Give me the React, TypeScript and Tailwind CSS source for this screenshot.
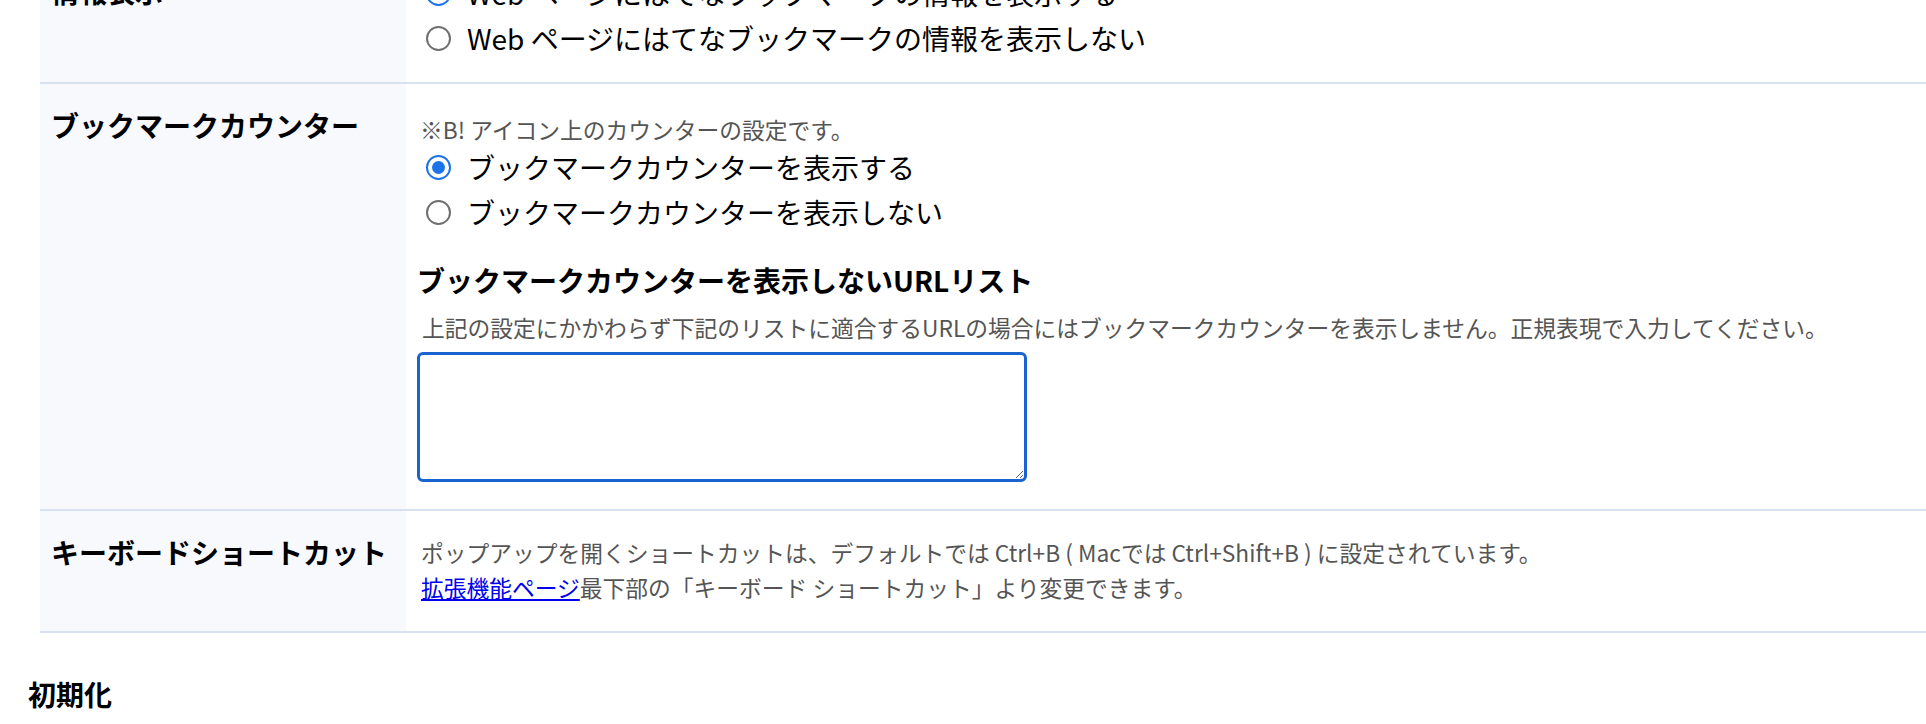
import React from "react";

const FONT = { fontFamily: '"Noto Sans CJK JP", "Noto Sans", sans-serif' };

function Radio({ checked, label }: { checked?: boolean; label: string }) {
  return (
    <label className="flex h-[30px] items-center gap-[16px] pl-[9px]">
      {checked ? (
        <span className="flex h-[25px] w-[25px] items-center justify-center rounded-full border-[2.5px] border-[#1a73e8] bg-white">
          <span className="h-[13px] w-[13px] rounded-full bg-[#1a73e8]" />
        </span>
      ) : (
        <span className="h-[25px] w-[25px] rounded-full border-2 border-[#6f6f6f] bg-white" />
      )}
      <span className="text-[28px] leading-[30px] text-black whitespace-nowrap">{label}</span>
    </label>
  );
}

function Row({ title, children, contentClass }: { title: string; children: React.ReactNode; contentClass: string }) {
  return (
    <div className="flex border-b-2 border-[#d8e1ef]">
      <div className="w-[366px] shrink-0 bg-[#f7f9fd] pl-[11px] pt-[21px]">
        <div className="text-[28px] font-bold leading-[40px] text-black">{title}</div>
      </div>
      <div className={"flex-1 bg-white pl-[11px] " + contentClass}>{children}</div>
    </div>
  );
}

export default function App() {
  return (
    <div className="min-h-[724px] overflow-hidden bg-white" style={FONT}>
      <div className="-mt-[50px]">
        <div className="ml-[40px]">
          <Row title="情報表示" contentClass="pt-[28px] pb-[29px]">
            <div className="flex flex-col gap-[15px]">
              <Radio checked label="Web ページにはてなブックマークの情報を表示する" />
              <Radio label="Web ページにはてなブックマークの情報を表示しない" />
            </div>
          </Row>

          <Row title="ブックマークカウンター" contentClass="pt-[30px] pb-[27px]">
            <p className="ml-[3px] text-[22.75px] leading-[32px] text-[#555]">※B! アイコン上のカウンターの設定です。</p>
            <div className="mt-[6px] flex flex-col gap-[15px]">
              <Radio checked label="ブックマークカウンターを表示する" />
              <Radio label="ブックマークカウンターを表示しない" />
            </div>
            <h3 className="mt-[33px] text-[28px] font-bold leading-[40px] text-black">
              ブックマークカウンターを表示しないURLリスト
            </h3>
            <p className="ml-[5px] mt-[12px] text-[22.75px] leading-[32px] text-[#555]">
              上記の設定にかかわらず下記のリストに適合するURLの場合にはブックマークカウンターを表示しません。正規表現で入力してください。
            </p>
            <textarea className="mt-[8px] block h-[130px] w-[610px] rounded-[6px] border-[3px] border-[#1a64cf] bg-white outline-none" />
          </Row>

          <Row title="キーボードショートカット" contentClass="pt-[24px] pb-[26px]">
            <div className="ml-[4px] text-[22.75px] leading-[35px] text-[#555]">
              <div>ポップアップを開くショートカットは、デフォルトでは Ctrl+B ( Macでは Ctrl+Shift+B ) に設定されています。</div>
              <div>
                <a href="#" className="text-[#0000ee] underline">拡張機能ページ</a>
                最下部の「キーボード ショートカット」より変更できます。
              </div>
            </div>
          </Row>
        </div>

        <h2 className="ml-[28px] mt-[41px] text-[28px] font-bold leading-[40px] text-black">初期化</h2>
      </div>
    </div>
  );
}
